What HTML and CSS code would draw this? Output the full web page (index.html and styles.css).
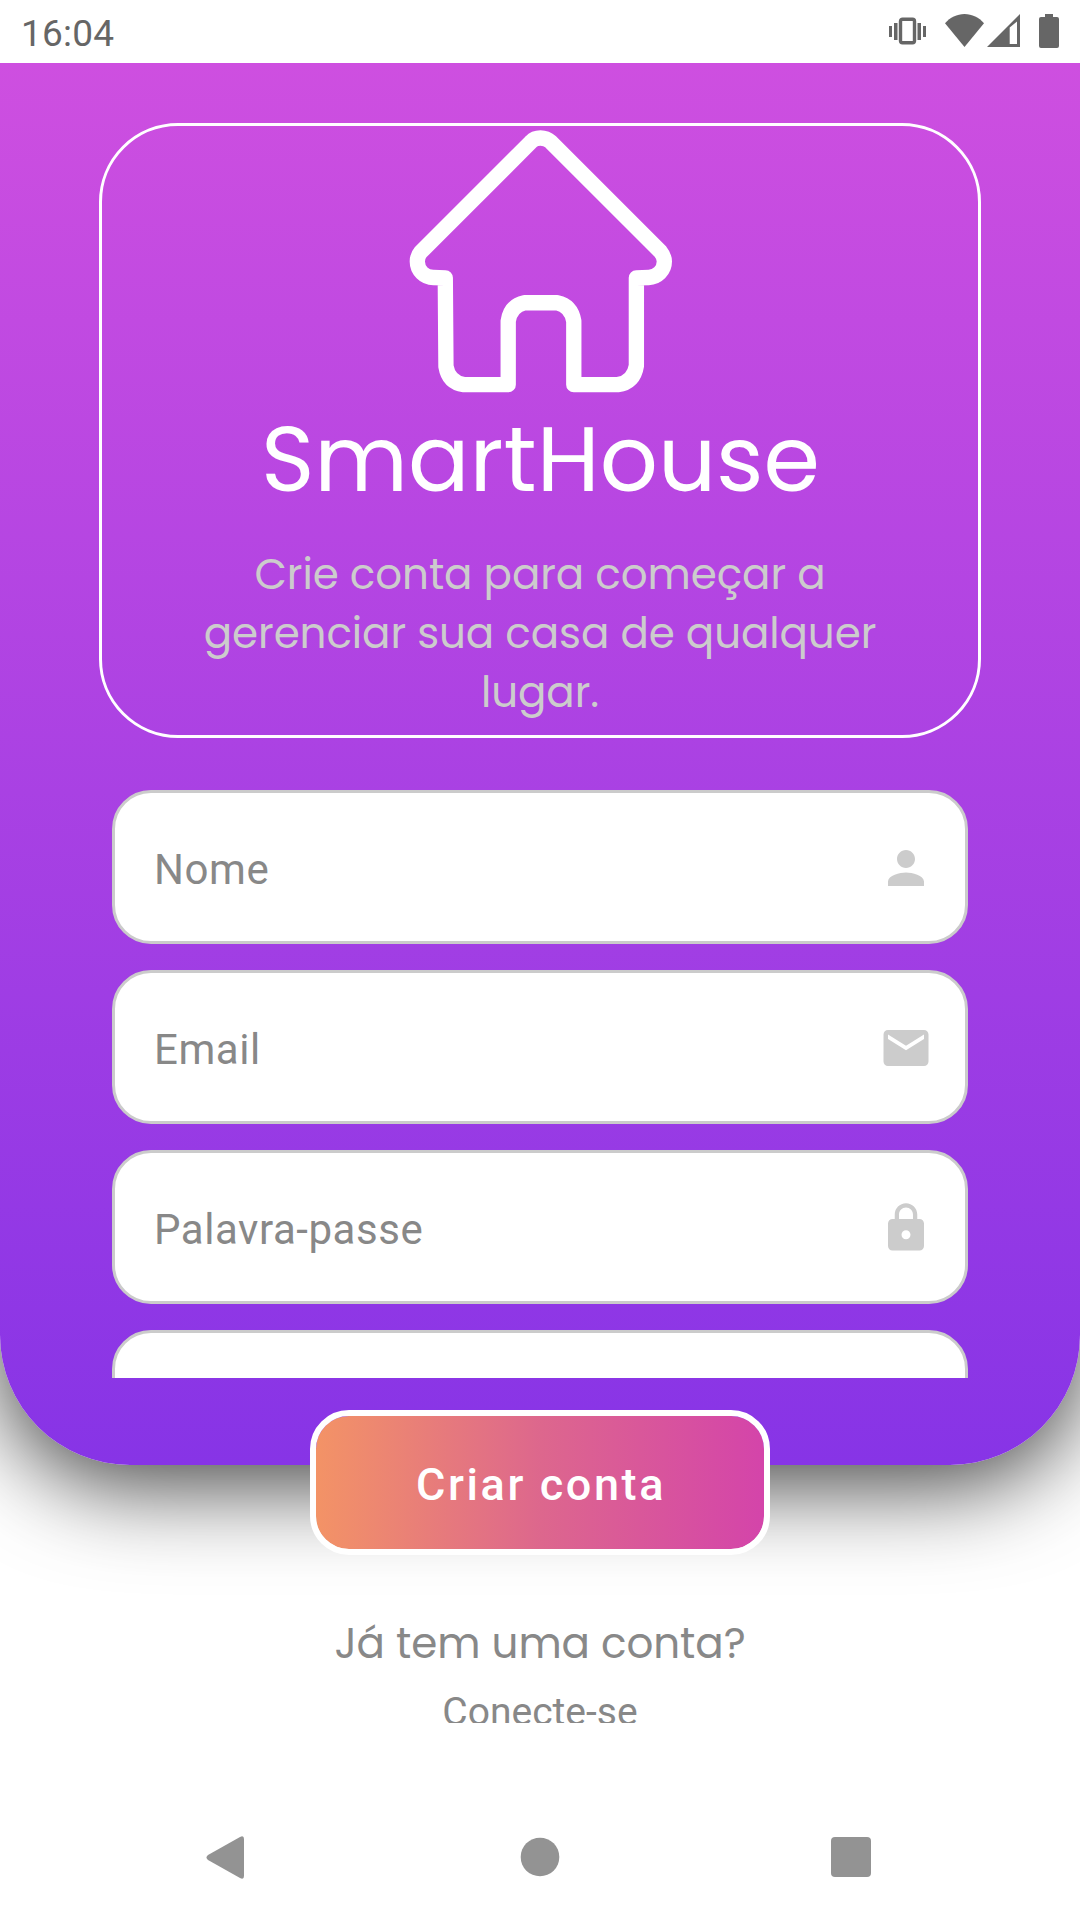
FILE: index.html
```html
<!DOCTYPE html>
<html lang="pt">
<head>
<meta charset="utf-8">
<title>SmartHouse</title>
<link rel="stylesheet" href="styles.css">
</head>
<body>
<div class="status-bar">
  <span class="clock">16:04</span>
  <div class="status-icons">
    <svg class="vibrate" viewBox="0 0 37 28" width="37" height="28"><path d="M0 9h3v11H0zM5 6h3.500v17H5zM28.500 6H32v17h-3.500zM34 9h3v11h-3z"/><rect x="11.500" y="2.200" width="14" height="23.600" rx="2" fill="none" stroke="#666" stroke-width="3.400"/></svg>
    <svg class="wifi" viewBox="0 0 39 33" width="39" height="33"><path d="M19.500 33 0 9.200C5 3.500 12 0 19.500 0S34 3.500 39 9.200z"/></svg>
    <svg class="signal" viewBox="0 0 33 33" width="33" height="33"><path fill-rule="evenodd" d="M33 0v33H0zM22.700 13.500V30H30V7.500z"/></svg>
    <svg class="battery" viewBox="0 0 20 34" width="20" height="34"><path d="M6 0h8v3h4a2 2 0 0 1 2 2v27a2 2 0 0 1-2 2H2a2 2 0 0 1-2-2V5a2 2 0 0 1 2-2h4z"/></svg>
  </div>
</div>
<main class="screen">
  <section class="panel">
    <header class="brand">
      <svg class="house" viewBox="58 58 788 790" width="263" height="263"><path d="M424 93Q434 82 452 82T483 94L812 423Q824 438 824 453A48 48 0 0 1 777 501L740 502V766Q732 816 684 823H552V632Q544 586 502 577H404Q362 586 355 632V823H222Q176 816 168 768L166 502 130 501A48 48 0 0 1 82 453Q82 437 92 425Z"/></svg>
      <h1 class="title">SmartHouse</h1>
      <p class="subtitle"><span>Crie conta para começar a</span> <span>gerenciar sua casa de qualquer</span> <span>lugar.</span></p>
    </header>
    <form class="fields">
      <label class="field"><span>Nome</span><svg viewBox="0 0 24 24"><path d="M12 12c2.210 0 4-1.790 4-4s-1.790-4-4-4-4 1.790-4 4 1.790 4 4 4zm0 2c-2.670 0-8 1.340-8 4v2h16v-2c0-2.660-5.330-4-8-4z"/></svg></label>
      <label class="field"><span>Email</span><svg viewBox="0 0 24 24"><path d="M20 4H4c-1.100 0-1.990.9-1.990 2L2 18c0 1.100.9 2 2 2h16c1.100 0 2-.9 2-2V6c0-1.100-.9-2-2-2zm0 4l-8 5-8-5V6l8 5 8-5v2z"/></svg></label>
      <label class="field"><span>Palavra-passe</span><svg viewBox="0 0 24 24"><path d="M18 8h-1V6c0-2.760-2.240-5-5-5S7 3.240 7 6v2H6c-1.100 0-2 .9-2 2v10c0 1.100.9 2 2 2h12c1.100 0 2-.9 2-2V10c0-1.100-.9-2-2-2zm-6 9c-1.100 0-2-.9-2-2s.9-2 2-2 2 .9 2 2-.9 2-2 2zm3.100-9H8.900V6c0-1.710 1.390-3.100 3.100-3.100s3.100 1.390 3.100 3.100v2z"/></svg></label>
      <div class="field"></div>
    </form>
  </section>
  <button class="submit" type="button">Criar conta</button>
  <p class="question">Já tem uma conta?</p>
  <a class="login">Conecte-se</a>
</main>
<nav class="nav-bar">
  <svg viewBox="0 0 38 43" width="38" height="43"><path d="M2 19 34 1Q38-1 38 3V40Q38 44 34 42L2 24Q-1 21.500 2 19z"/></svg>
  <svg class="home" viewBox="0 0 40 40" width="40" height="40"><circle cx="20" cy="20" r="19.300"/></svg>
  <svg viewBox="0 0 40 40" width="40" height="40"><rect width="40" height="40" rx="4"/></svg>
</nav>
</body>
</html>
```
FILE: styles.css
```css
* { box-sizing: border-box; margin: 0; }

body {
  display: flex;
  flex-direction: column;
  width: 1080px;
  height: 1920px;
  overflow: hidden;
  background: #fff;
  font-family: Roboto, sans-serif;
  color: #888;
}

.status-bar {
  position: relative;
  z-index: 1;
  display: flex;
  justify-content: space-between;
  align-items: flex-start;
  height: 63px;
  padding: 0 21px;
  background: #fff;
  color: #666;
}

.clock { font-size: 37px; line-height: 67px; letter-spacing: 0.200px; }

.status-icons { display: flex; padding-top: 14px; fill: #666; }
.vibrate { margin: 3px 19.500px 0 0; }
.wifi { margin-right: 3px; }
.signal { margin-right: 19px; }

.screen {
  display: flex;
  flex-direction: column;
  align-items: center;
  height: 1660px;
}

.panel {
  display: flex;
  flex-direction: column;
  align-items: center;
  flex: none;
  width: 1080px;
  height: 1402px;
  padding-top: 60px;
  border-radius: 0 0 130px 130px;
  background: linear-gradient(#ce4fe0, #8734e6);
  box-shadow: 0 20px 92px rgba(0, 0, 0, 0.75);
}

.brand {
  display: flex;
  flex-direction: column;
  align-items: center;
  width: 882px;
  height: 615px;
  padding-top: 4px;
  border: 3px solid #fff;
  border-radius: 79px;
}

.house {
  flex: none;
  fill: none;
  stroke: #fff;
  stroke-width: 46;
  stroke-linejoin: round;
}

.title, .subtitle, .question {
  font-family: Poppins, Inter, sans-serif;
  font-weight: 400;
  white-space: nowrap;
}

.title {
  height: 135px;
  padding-left: 1px;
  font-size: 91px;
  line-height: 133px;
  color: #fff;
}

.subtitle {
  display: flex;
  flex-direction: column;
  align-items: center;
  margin-top: 17px;
  font-size: 42px;
  line-height: 59px;
  letter-spacing: -0.070px;
  color: #ccc;
}

.fields {
  display: flex;
  flex-direction: column;
  gap: 26px;
  width: 856px;
  height: 588px;
  margin-top: 52px;
  overflow: hidden;
}

.field {
  display: flex;
  flex: none;
  align-items: center;
  justify-content: space-between;
  height: 154px;
  padding: 0 32.500px 0 39px;
  border: 3px solid #cbcbcb;
  border-radius: 39px;
  background: #fff;
  font-size: 42px;
  letter-spacing: 0.550px;
}

.field span { padding-top: 4px; }
.field svg { width: 54px; height: 54px; margin-top: 1px; fill: #ccc; }

.submit {
  z-index: 1;
  flex: none;
  width: 460px;
  height: 145px;
  margin-top: -55px;
  padding: 4px 0 0 2px;
  border: 6px solid #fff;
  border-radius: 39px;
  background: linear-gradient(90deg, #f39366, #dd678d 50%, #d444aa) padding-box;
  font: 500 45px Roboto, sans-serif;
  letter-spacing: 2.600px;
  color: #fff;
}

.question {
  margin-top: 59px;
  font-size: 42px;
  line-height: 60px;
  letter-spacing: -0.070px;
}

.login {
  height: 49px;
  overflow: hidden;
  font-size: 39px;
  line-height: 76px;
}

.nav-bar {
  display: flex;
  align-items: center;
  justify-content: space-between;
  height: 114px;
  margin-top: 77px;
  padding: 0 209px 0 206px;
  fill: #939393;
}

.home { margin-left: 4px; }
```
